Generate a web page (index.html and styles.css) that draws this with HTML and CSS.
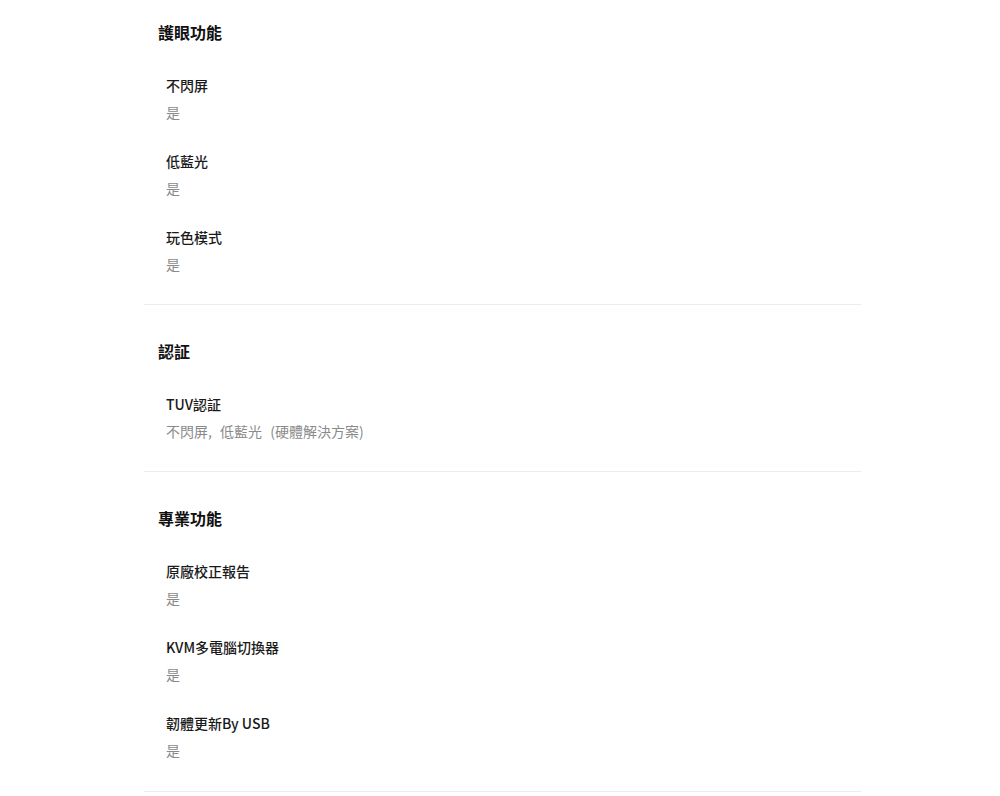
FILE: index.html
```html
<!DOCTYPE html>
<html>

<head>
    <meta charset="utf-8" />
    <meta name="viewport" content="width=device-width, initial-scale=1" />
    <title>規格</title>
    <link rel="stylesheet" href="styles.css">
</head>

<body>
    <div class="specs">
        <div class="spec-group">
            <div class="group-title">護眼功能</div>
            <div class="items">
                <div class="item">
                    <div class="label">不閃屏</div>
                    <div class="value">是</div>
                </div>
                <div class="item">
                    <div class="label">低藍光</div>
                    <div class="value">是</div>
                </div>
                <div class="item">
                    <div class="label">玩色模式</div>
                    <div class="value">是</div>
                </div>
            </div>
        </div>

        <div class="spec-group">
            <div class="group-title">認証</div>
            <div class="items">
                <div class="item">
                    <div class="label">TUV認証</div>
                    <div class="value">不閃屏, 低藍光 (硬體解決方案)</div>
                </div>
            </div>
        </div>

        <div class="spec-group">
            <div class="group-title">專業功能</div>
            <div class="items">
                <div class="item">
                    <div class="label">原廠校正報告</div>
                    <div class="value">是</div>
                </div>
                <div class="item">
                    <div class="label">KVM多電腦切換器</div>
                    <div class="value">是</div>
                </div>
                <div class="item">
                    <div class="label">韌體更新By USB</div>
                    <div class="value">是</div>
                </div>
            </div>
        </div>
    </div>
</body>

</html>
```

FILE: styles.css
```css
body {
    margin: 0;
    overflow: hidden;
    background: #fff;
    color: #111;
    font-family: "Noto Sans CJK TC", "Noto Sans", sans-serif;
}

.specs {
    width: 717px;
    margin: -14px 0 0 144px;
}

.spec-group {
    padding: 27px 14px 28px;
    border-bottom: 1px solid #ececec;
}

.spec-group:last-child {
    padding-bottom: 29px;
}

.group-title {
    font-size: 16px;
    font-weight: 700;
    line-height: 38px;
    margin-bottom: 22px;
}

.items {
    display: flex;
    flex-direction: column;
    gap: 25px;
    padding-left: 8px;
}

.label {
    font-size: 14px;
    font-weight: 500;
    line-height: 24px;
    color: #1a1a1a;
}

.value {
    margin-top: 3px;
    font-size: 14px;
    line-height: 24px;
    word-spacing: 5px;
    color: #8a8a8a;
}
```
